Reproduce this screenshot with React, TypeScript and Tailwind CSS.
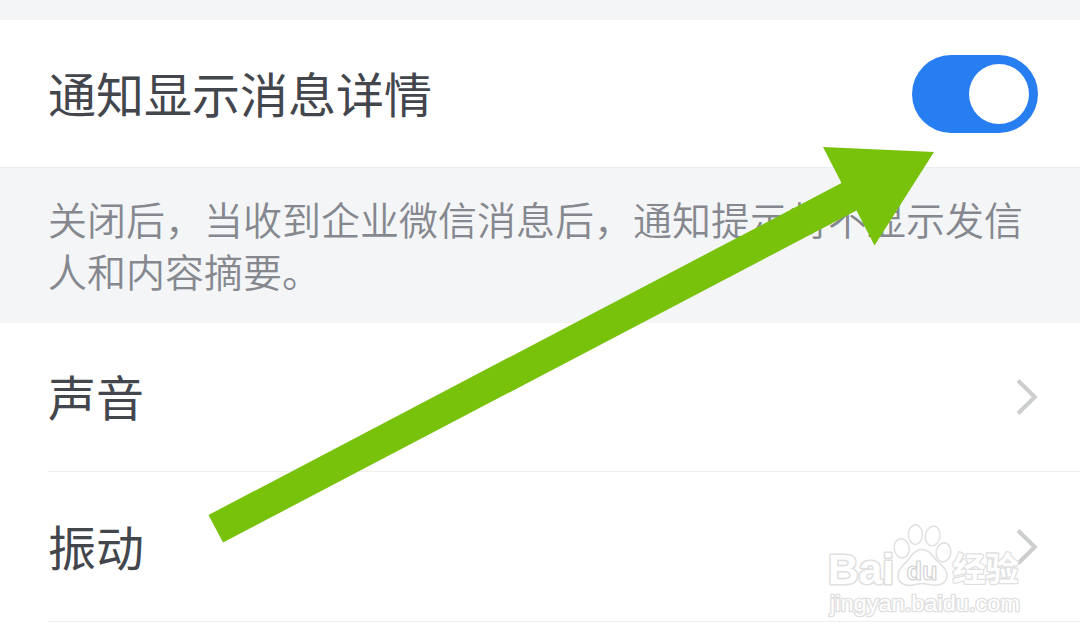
import React from 'react';

interface RowProps {
    label: string;
    height: string;
    children?: React.ReactNode;
}

const SettingRow: React.FC<RowProps> = ({ label, height, children }) => {
    return (
        <div className={`flex items-center justify-between bg-white pl-[48px] pr-[42px] ${height}`}>
            <span className="pb-[4px] text-[48px] leading-[72px] text-[#43464d]">{label}</span>
            {children}
        </div>
    );
};

const Toggle: React.FC = () => {
    return (
        <button className="flex h-[78px] w-[126px] items-center justify-end rounded-full bg-[#277ef0] pr-[9px]">
            <span className="block h-[60px] w-[60px] rounded-full bg-white" />
        </button>
    );
};

const Chevron: React.FC = () => {
    return (
        <svg width="22" height="38" viewBox="0 0 22 38" fill="none">
            <path d="M2 2.5 L18.8 19 L2 35.5" stroke="#cbcdcf" strokeWidth="4" />
        </svg>
    );
};

const Arrow: React.FC = () => {
    return (
        <svg className="absolute left-0 top-0" width="1080" height="640" viewBox="0 0 1080 640">
            <polygon
                points="823,147 934,152 874.5,245.5 856.5,210.5 223,542.5 208.5,515 841.5,183"
                fill="#78c20c"
            />
        </svg>
    );
};

const Watermark: React.FC = () => {
    return (
        <svg
            className="absolute left-[810px] top-[510px]"
            width="230"
            height="120"
            viewBox="0 0 230 120"
            fill="#ffffff"
            stroke="#e0e0e0"
            strokeWidth="1.5"
            strokeLinejoin="round"
        >
            <text x="18" y="73.5" fontSize="42" textLength="66" lengthAdjust="spacingAndGlyphs" fontFamily="'Liberation Sans', sans-serif" fontWeight="700" strokeWidth="3.2" paintOrder="stroke">Bai</text>
            <ellipse cx="91.7" cy="38.3" rx="7.5" ry="9.7" transform="rotate(-8 91.7 38.3)" />
            <ellipse cx="105.4" cy="24.6" rx="7" ry="9.8" />
            <ellipse cx="122.7" cy="26" rx="7.3" ry="9.8" transform="rotate(10 122.7 26)" />
            <ellipse cx="133.5" cy="42.4" rx="7.3" ry="9.6" transform="rotate(12 133.5 42.4)" />
            <path d="M112 39.5 C119 39.5 122 45 126 50 C130 54 137 58 137 65 C137 73 130 76 123 75 C118 74.5 116 73.5 112 73.5 C108 73.5 105 75.5 99 75.5 C92 75 88 71 88 65 C88 58 95 54 99 49 C102 44 106 39.5 112 39.5 Z" />
            <text x="96.5" y="70" fontSize="26" textLength="31" lengthAdjust="spacingAndGlyphs" fontFamily="'Liberation Sans', sans-serif" fontWeight="700" stroke="#d2d2d2" strokeWidth="1.2">du</text>
            <text x="142.5" y="71" fontSize="33" textLength="66" lengthAdjust="spacingAndGlyphs" fontFamily="'Noto Sans CJK SC', sans-serif" fontWeight="700" strokeWidth="2.6" paintOrder="stroke">经验</text>
            <text x="20" y="100.5" fontSize="22" textLength="190" lengthAdjust="spacingAndGlyphs" fontFamily="'Liberation Sans', sans-serif" strokeWidth="2.6" paintOrder="stroke">jingyan.baidu.com</text>
        </svg>
    );
};

const App: React.FC = () => {
    return (
        <div className="relative h-[640px] w-[1080px] overflow-hidden bg-white font-['Noto_Sans_CJK_SC',sans-serif]">
            <div className="h-5 bg-[#f4f5f7]" />
            <SettingRow label="通知显示消息详情" height="h-[147px]">
                <Toggle />
            </SettingRow>
            <p className="h-[156px] border-t border-[#ebecee] bg-[#f4f5f7] pl-[48px] pt-[24px] text-[39px] font-[350] leading-[52px] text-[#85888f]">
                关闭后，当收到企业微信消息后，通知提示将不显示发信
                <br />
                人和内容摘要。
            </p>
            <SettingRow label="声音" height="h-[148px]">
                <Chevron />
            </SettingRow>
            <div className="ml-[48px] h-px bg-[#f0f0f1]" />
            <SettingRow label="振动" height="h-[149px]">
                <Chevron />
            </SettingRow>
            <div className="ml-[48px] h-px bg-[#f0f0f1]" />
            <Arrow />
            <Watermark />
        </div>
    );
};

export default App;
